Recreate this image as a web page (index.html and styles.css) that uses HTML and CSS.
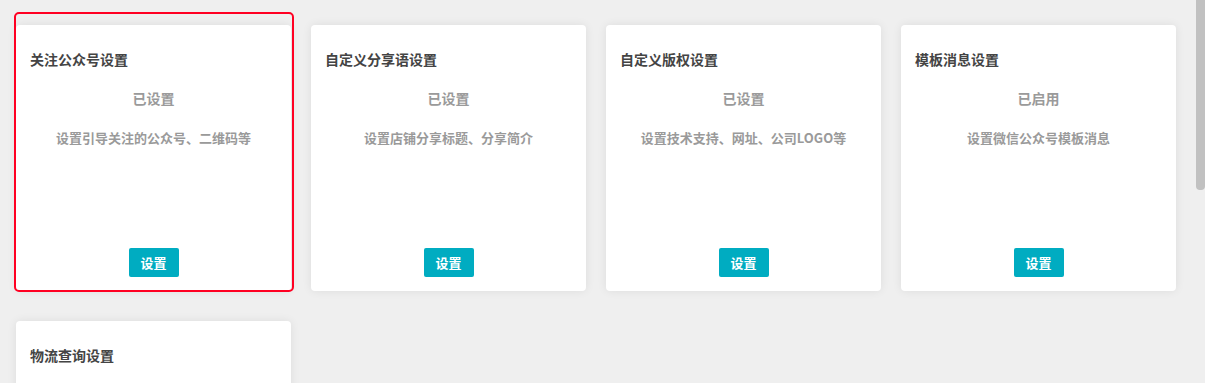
FILE: index.html
```html
<!DOCTYPE html>
<html lang="zh-CN">
<head>
    <meta charset="UTF-8">
    <meta name="viewport" content="width=device-width, initial-scale=1.0">
    <title>设置</title>
    <link rel="stylesheet" href="styles.css">
</head>
<body>
    <div class="page">
        <div class="main">
            <div class="grid">
                <div class="card selected">
                    <div class="title">关注公众号设置</div>
                    <div class="status">已设置</div>
                    <div class="desc">设置引导关注的公众号、二维码等</div>
                    <button class="btn">设置</button>
                </div>
                <div class="card">
                    <div class="title">自定义分享语设置</div>
                    <div class="status">已设置</div>
                    <div class="desc">设置店铺分享标题、分享简介</div>
                    <button class="btn">设置</button>
                </div>
                <div class="card">
                    <div class="title">自定义版权设置</div>
                    <div class="status">已设置</div>
                    <div class="desc">设置技术支持、网址、公司LOGO等</div>
                    <button class="btn">设置</button>
                </div>
                <div class="card">
                    <div class="title">模板消息设置</div>
                    <div class="status">已启用</div>
                    <div class="desc">设置微信公众号模板消息</div>
                    <button class="btn">设置</button>
                </div>
                <div class="card">
                    <div class="title">物流查询设置</div>
                    <div class="status">已设置</div>
                    <div class="desc">设置物流查询接口</div>
                    <button class="btn">设置</button>
                </div>
            </div>
        </div>
        <div class="scrollbar"><div class="thumb"></div></div>
    </div>
</body>
</html>
```

FILE: styles.css
```css
html, body {
    margin: 0;
    height: 100%;
    overflow: hidden;
}
body {
    font-family: "Noto Sans CJK SC", "Open Sans", sans-serif;
    background-color: #efefef;
}
.page {
    display: flex;
    height: 100%;
}
.main {
    flex: 1;
    padding: 25px 0 0 16px;
}
.grid {
    display: grid;
    grid-template-columns: repeat(4, 275px);
    column-gap: 20px;
    row-gap: 30px;
}
.card {
    position: relative;
    display: flex;
    flex-direction: column;
    height: 266px;
    padding: 0 14px 14px;
    box-sizing: border-box;
    background-color: #ffffff;
    border-radius: 4px;
    box-shadow: 0 0 10px rgba(0, 0, 0, 0.08);
}
.card.selected::after {
    content: "";
    position: absolute;
    top: -13px;
    left: -2px;
    right: -3px;
    bottom: -1px;
    border: 2px solid #ff0022;
    border-radius: 5px;
}
.title {
    margin-top: 24px;
    font-size: 14px;
    line-height: 20px;
    font-weight: bold;
    color: #444444;
}
.status {
    margin-top: 19px;
    font-size: 14px;
    line-height: 20px;
    font-weight: bold;
    color: #9a9a9a;
    text-align: center;
}
.desc {
    margin-top: 20px;
    font-size: 13px;
    line-height: 20px;
    font-weight: bold;
    color: #9a9a9a;
    text-align: center;
}
.btn {
    align-self: center;
    margin-top: auto;
    width: 50px;
    height: 29px;
    padding: 0;
    border: none;
    border-radius: 2px;
    background-color: #00acc1;
    color: #ffffff;
    font-family: inherit;
    font-size: 13px;
    font-weight: bold;
}
.scrollbar {
    width: 9px;
}
.thumb {
    height: 190px;
    background-color: #c1c1c1;
    border-radius: 0 0 4px 4px;
}
```
